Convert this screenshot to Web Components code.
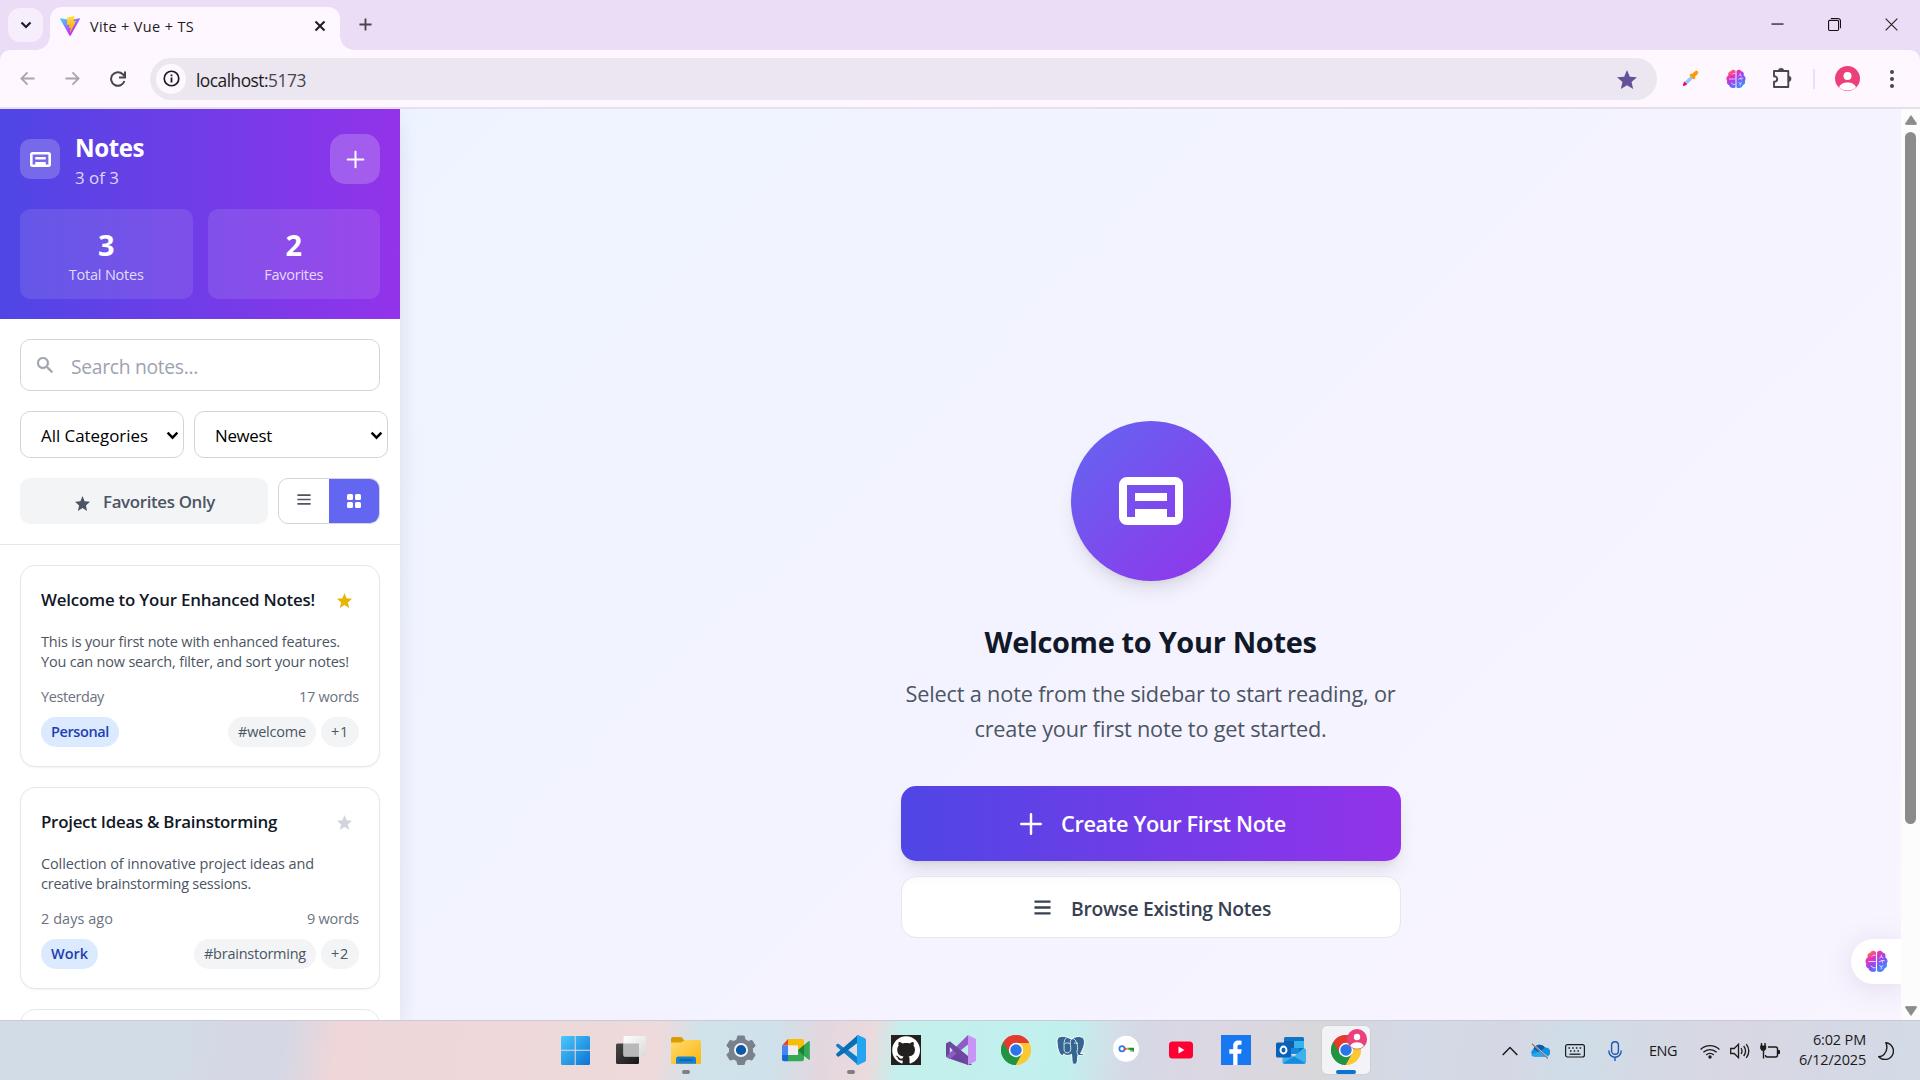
<!DOCTYPE html>
<html lang="en">
<head>
<meta charset="utf-8">
<title>Vite + Vue + TS</title>
<style>
html,body{margin:0;width:1920px;height:1080px;overflow:hidden;font-family:"Open Sans","Noto Sans",sans-serif;color:#111827}
</style>
</head>
<body>
<desktop-screen></desktop-screen>
<script>
const STAR='<path d="M12 17.27L18.18 21l-1.64-7.03L22 9.24l-7.19-.61L12 2 9.19 8.63 2 9.24l5.46 4.73L5.82 21z" fill="currentColor"/>';
const CHROME=`<circle cx="15" cy="15" r="15" fill="#fff"/>
<path d="M15 15L2.01 7.5A15 15 0 0 1 27.99 7.5z" fill="#e33b2e"/><path d="M15 15L2.01 7.5A15 15 0 0 0 15 30z" fill="#229342"/><path d="M15 15L27.99 7.5A15 15 0 0 1 15 30z" fill="#fcc934"/>
<path d="M15 8H28.2A15 15 0 0 0 2.01 7.5L8.9 18.5z" fill="#e33b2e"/><path d="M21.06 18.5L14.5 30A15 15 0 0 0 28.3 8H15z" fill="#fcc934"/><path d="M8.94 18.5L2.01 7.5A15 15 0 0 0 14.7 30L21.06 18.6z" fill="#229342"/>
<circle cx="15" cy="15" r="7.2" fill="#fff"/><circle cx="15" cy="15" r="5.7" fill="#2b75e8"/>`;
const AVATAR='<circle cx="12.5" cy="12.5" r="12.5" fill="#ec407a"/><circle cx="12.5" cy="10" r="4" fill="#fff"/><path d="M4 21.2c1.5-3.4 5-4.7 8.500-4.7s7 1.300 8.500 4.700A12.500 12.500 0 0 1 4 21.200z" fill="#fff"/>';
const ICONS={
chev:['0 0 12 8','<path d="M1.500 1.500L6 6l4.500-4.500" fill="none" stroke="currentColor" stroke-width="2.200"/>'],
vite:['0 0 256 257','<defs><linearGradient id="a" x1="-.8%" x2="57.600%" y1="7.600%" y2="78.400%"><stop stop-color="#41d1ff"/><stop offset="1" stop-color="#bd34fe"/></linearGradient><linearGradient id="b" x1="43%" x2="50%" y1="2%" y2="89%"><stop stop-color="#ffea83"/><stop offset=".08" stop-color="#ffdd35"/><stop offset="1" stop-color="#ffa800"/></linearGradient></defs><path fill="url(#a)" d="M255.153 37.938L134.897 252.976c-2.483 4.440-8.862 4.466-11.382.048L.875 37.958c-2.746-4.814 1.371-10.646 6.827-9.670l120.385 21.517a6.537 6.537 0 0 0 2.322-.004l117.867-21.483c5.438-.991 9.574 4.796 6.877 9.620Z"/><path fill="url(#b)" d="M185.432.063L96.440 17.501a3.268 3.268 0 0 0-2.634 3.014l-5.474 92.456a3.268 3.268 0 0 0 3.997 3.378l24.777-5.718c2.318-.535 4.413 1.507 3.936 3.838l-7.361 36.047c-.495 2.426 1.782 4.500 4.151 3.780l15.304-4.649c2.372-.720 4.652 1.360 4.150 3.788l-11.698 56.621c-.732 3.542 3.979 5.473 5.943 2.437l1.313-2.028l72.516-144.720c1.215-2.423-.880-5.186-3.540-4.672l-25.505 4.922c-2.396.462-4.435-1.770-3.759-4.114l16.646-57.705c.677-2.350-1.370-4.583-3.769-4.113Z"/>'],
x:['0 0 12 12','<path d="M1.500 1.500l9 9M10.500 1.500l-9 9" stroke="currentColor" stroke-width="2"/>'],
xthin:['0 0 14 14','<path d="M.7.7l12.600 12.600M13.300.7L.7 13.300" stroke="currentColor" stroke-width="1.200"/>'],
plus:['0 0 14 14','<path d="M7 .5v13M.5 7h13" stroke="currentColor" stroke-width="2"/>'],
plusr:['0 0 18 18','<path d="M9 1v16M1 9h16" stroke="currentColor" stroke-width="2" stroke-linecap="round"/>'],
min:['0 0 14 14','<path d="M.5 6.500h13" stroke="#000" stroke-width="1.200"/>'],
restore:['0 0 14 14','<rect x=".6" y="2.600" width="10.800" height="10.800" rx="1.200" fill="none" stroke="#111" stroke-width="1.200"/><path d="M3 .6h7.500a3 3 0 0 1 3 3V11" fill="none" stroke="#111" stroke-width="1.200"/>'],
back:['0 0 16 16','<path d="M15.500 8H2M8 1.500L1.500 8 8 14.500" fill="none" stroke="currentColor" stroke-width="1.900"/>'],
fwd:['0 0 16 16','<path d="M.5 8H14M8 1.500L14.500 8 8 14.500" fill="none" stroke="currentColor" stroke-width="1.900"/>'],
reload:['0 0 16 16','<path d="M14.400 10A6.800 6.800 0 1 1 12.800 3.200L14.800 5.300" fill="none" stroke="currentColor" stroke-width="2"/><path d="M15 .5V6.500H9" fill="none" stroke="currentColor" stroke-width="2"/>'],
info:['0 0 18 18','<circle cx="9" cy="9" r="7.700" fill="none" stroke="currentColor" stroke-width="1.800"/><path d="M9 8v5.200M9 4.800v1.900" stroke="currentColor" stroke-width="1.900"/>'],
star:['2 2 20 19',STAR],
dropper:['0 0 18 18','<path d="M1 17c0-2.600.8-4 2.200-5.200l2.600 2.600C4.800 16.200 3.300 17 1 17z" fill="#f50057"/><path d="M3.500 12L9.500 6l2.600 2.600-6 6c-1 .8-3.400-1.400-2.600-2.600z" fill="#90caf9"/><path d="M8.200 5.200l1.300-1.300 1 .9 3-3c2.200-2 4.500.4 2.600 2.600l-3 3 .9 1-1.300 1.300z" fill="#ff9800" stroke="#ff9800" stroke-width=".8"/>'],
brain:['0 0 24 24','<defs><linearGradient id="g" x1=".1" y1="0" x2=".8" y2="1"><stop stop-color="#ff9a1f"/><stop offset=".28" stop-color="#ee2fb5"/><stop offset=".58" stop-color="#8b4df5"/><stop offset="1" stop-color="#2a9bff"/></linearGradient></defs><path fill="url(#g)" d="M11.400 2.200C9.500 0 6.300.600 5.600 2.700 3.200 3 1.900 5.500 2.900 7.500.400 8.800-.200 12.300 1.400 14.300c-1 2.400.4 4.500 2.300 5 .6 3.500 5.500 4.700 7.700 2.500zM12.600 2.200c1.900-2.200 5.100-1.600 5.800.500 2.400.300 3.700 2.800 2.700 4.800 2.500 1.300 3.100 4.800 1.500 6.800 1 2.400-.4 4.500-2.300 5-.6 3.500-5.500 4.700-7.700 2.500z"/><path d="M11 5.500H8.500L7 7M3.500 12H11M11 18.500H8.500L6 16.500M15 8.500l1.500-1.200M17 5v2.300l2 1M14.500 12.500l3-1.500h3M17.500 11l1 2.500M15 16l2 1.500v2.500M17 17.500l2-1.500" fill="none" stroke="#fff" stroke-width=".8"/>'],
puzzle:['0 0 22 22','<path d="M3 4h14.300v16H3v-5.200c4.300 0 4.300-5.600 0-5.600z" fill="none" stroke="currentColor" stroke-width="1.900" stroke-linejoin="round"/><path d="M7.300 4a2.800 2.800 0 0 1 5.600 0zM17.300 9a2.800 2.800 0 0 1 0 5.600z" fill="currentColor" stroke="currentColor" stroke-width=".6"/>'],
avatar:['0 0 25 25',AVATAR],
dots:['0 0 4 18','<g fill="currentColor"><circle cx="2" cy="2" r="2"/><circle cx="2" cy="9" r="2"/><circle cx="2" cy="16" r="2"/></g>'],
note:['0 0 64 48','<path fill="currentColor" fill-rule="evenodd" d="M8 0h48a8 8 0 0 1 8 8v32a8 8 0 0 1-8 8H8a8 8 0 0 1-8-8V8a8 8 0 0 1 8-8zM8 8v32h8v-8h32v8h8V8zM16 16h32v8H16z"/>'],
search:['3 3 17.500 17.500','<path fill="currentColor" stroke="currentColor" stroke-width=".4" d="M15.500 14h-.79l-.28-.27A6.470 6.470 0 0 0 16 9.500 6.500 6.500 0 1 0 9.500 16c1.610 0 3.090-.59 4.230-1.570l.27.28v.79l5 4.990L20.490 19l-4.990-5zm-6 0C7.010 14 5 11.990 5 9.500S7.010 5 9.500 5 14 7.010 14 9.500 11.990 14 9.500 14z"/>'],
list:['0 0 18 14','<path d="M.5 1.500h17M.5 7h17M.5 12.500h17" stroke="currentColor" stroke-width="2.200"/>'],
grid:['0 0 14 14','<g fill="currentColor"><rect width="6" height="6" rx="1.500"/><rect x="8" width="6" height="6" rx="1.500"/><rect y="8" width="6" height="6" rx="1.500"/><rect x="8" y="8" width="6" height="6" rx="1.500"/></g>'],
up:['0 0 12 10','<path d="M6 .5L11.500 8.500q.2 1-.8 1H1.300q-1 0-.8-1z" fill="#8b8b8b" stroke="#8b8b8b" stroke-width=".8"/>'],
down:['0 0 12 10','<path d="M6 9.500L11.500 1.500q.2-1-.8-1H1.300q-1 0-.8 1z" fill="#8b8b8b" stroke="#8b8b8b" stroke-width=".8"/>'],
win:['0 0 30 30','<defs><linearGradient id="w" x1="0" y1="0" x2="1" y2="1"><stop stop-color="#4cc9fb"/><stop offset="1" stop-color="#0a74d4"/></linearGradient></defs><path fill="url(#w)" d="M0 2.500a1.500 1.500 0 0 1 1.500-1.500H13.700v13.800H0zM14.700 1H27.500a1.500 1.500 0 0 1 1.500 1.500v12.300H14.700zM0 15.800H13.700V30H1.500a1.500 1.500 0 0 1-1.500-1.500zM14.700 15.800h14.300v12.700A1.500 1.500 0 0 1 27.500 30H14.700z"/>'],
task:['0 0 30 30','<defs><linearGradient id="t" x1="0" y1="0" x2="1" y2="1"><stop stop-color="#fff"/><stop offset="1" stop-color="#d9d9db"/></linearGradient><linearGradient id="k" x1="0" y1="0" x2="1" y2="1"><stop stop-color="#484848"/><stop offset="1" stop-color="#161616"/></linearGradient></defs><rect x="0" y="8.500" width="23" height="20.500" rx="1.500" fill="url(#k)"/><rect x="7.500" y="1" width="22.500" height="20.500" rx="1.500" fill="url(#t)"/><path d="M7.500 8.500H23v13H9a1.500 1.500 0 0 1-1.500-1.500z" fill="#b9b9b9"/>'],
folder:['0 0 30 30','<defs><linearGradient id="f" x1="0" y1="0" x2="1" y2="1"><stop stop-color="#ffdc70"/><stop offset="1" stop-color="#fab60e"/></linearGradient></defs><path d="M0 4a2 2 0 0 1 2-2h7.500q1 0 1.700.8L13 5h15v6H0z" fill="#dd9a06"/><path d="M0 7.500h9.500q1.200 0 2-.8l1-.9q.8-.8 2-.8H28a2 2 0 0 1 2 2V27.500a1.500 1.500 0 0 1-1.500 1.500h-27A1.500 1.500 0 0 1 0 27.500z" fill="url(#f)"/><path d="M5 28.800V24a2.500 2.500 0 0 1 2.500-2.500h15A2.500 2.500 0 0 1 25 24v4.800z" fill="#1681d3"/><path d="M8.500 25h13" stroke="#0b5299" stroke-width="1.200"/>'],
gear:['0 0 30 30','<path d="M11.800 1h6.400l1 3.700 3 1.700 3.800-1 3.200 5.300-2.700 2.900v3.300l2.700 2.900-3.200 5.300-3.800-1-3 1.700-1 3.700h-6.400l-1-3.700-3-1.700-3.800 1L.8 19.800l2.700-2.900v-3.300L.8 10.700 4 5.400l3.800 1 3-1.700z" fill="#78828c" stroke="#78828c" stroke-width="1" stroke-linejoin="round"/><circle cx="15" cy="15" r="7" fill="#f4f4f4"/><circle cx="15" cy="15" r="5.100" fill="#0d58a6"/>'],
meet:['0 0 30 30','<path d="M1 10.500L7 4v6.500z" fill="#ea4335"/><path d="M7 4h14a2 2 0 0 1 2 2v6l-6 3v-4.500H7z" fill="#fbbc04"/><path d="M1 10.500h6v9.500H1z" fill="#4285f4"/><path d="M1 20h6v6.300H3a2 2 0 0 1-2-2z" fill="#1967d2"/><path d="M7 20h10v-5l6 3v6.300a2 2 0 0 1-2 2H7z" fill="#34a853"/><path d="M7 10.500h10V20H7z" fill="#f1edf0"/><path d="M17 15l6-5v11z" fill="#188038"/><path d="M23 10l4.500-3.700q1.300-.8 1.300.7v17q0 1.500-1.300.6L23 21z" fill="#34a853"/>'],
vscode:['0 0 30 30','<path d="M22 0L8 13 2.800 9Q1.700 8.300.9 9L.3 9.700Q-.3 10.600.5 11.400L22 30z" fill="#0f7fc9"/><path d="M.5 18.600L22 0V8.500L3 21.500q-.9.500-1.700-.2L.5 20.400q-.7-.9 0-1.800z" fill="#0a6eb4"/><path d="M22 0l7 3.300q1 .5 1 1.600v20.200q0 1.100-1 1.600L22 30q-1.200.2-1.800-.6.8.5.8-.6V1.200q0-1.100-.8-.6Q20.800-.2 22 0z" fill="#24a5f1"/><path d="M21 8.300L12.200 15 21 21.700z" fill="#dfdce3"/>'],
github:['0 0 30 30','<path d="M0 0h30v30H0z" fill="#24201f"/><g transform="translate(1.200 1) scale(1.160)"><path fill="#fff" d="M12 .297c-6.630 0-12 5.373-12 12 0 5.303 3.438 9.800 8.205 11.385.6.113.82-.258.82-.577 0-.285-.01-1.040-.015-2.040-3.338.724-4.042-1.610-4.042-1.610C4.422 18.070 3.633 17.700 3.633 17.700c-1.087-.744.084-.729.084-.729 1.205.084 1.838 1.236 1.838 1.236 1.070 1.835 2.809 1.305 3.495.998.108-.776.417-1.305.76-1.605-2.665-.3-5.466-1.332-5.466-5.930 0-1.310.465-2.380 1.235-3.220-.135-.303-.54-1.523.105-3.176 0 0 1.005-.322 3.300 1.230.96-.267 1.980-.399 3-.405 1.020.006 2.040.138 3 .405 2.280-1.552 3.285-1.230 3.285-1.230.645 1.653.24 2.873.12 3.176.765.840 1.230 1.910 1.230 3.220 0 4.610-2.805 5.625-5.475 5.920.42.360.81 1.096.81 2.220 0 1.606-.015 2.896-.015 3.286 0 .315.210.690.825.570C20.565 22.092 24 17.592 24 12.297c0-6.627-5.373-12-12-12"/></g>'],
vs:['0 0 30 30','<path d="M0 8.500l4-2L26 30l-4 0L4 23.800l-4-2zM3.800 11v8.200L8 15z" fill="#6a449c" fill-rule="evenodd"/><path d="M22 0L0 21.700l4 2.200L22 9.500z" fill="#8e5cc4"/><path d="M4 6.500L22 21v9L0 8.500z" fill="#6f48a2"/><path d="M22 0l8 4v22l-8 4z" fill="#c894f6"/>'],
chrome:['0 0 30 30',CHROME],
postgres:['0 0 30 30','<g stroke="#fff" stroke-width="1" stroke-linejoin="round" fill="#336791"><path d="M16 4c3-3 9-3.500 11.500-.5 2.500 3.300-.2 10.500-3 15 1.800.3 3 0 4 .2-.5 2-4.500 2.300-6.500 1.500-.8 2.500.3 8-2.500 9-3 .8-3.300-2-3.500-4.500l-.5-5.500c-3 2-6.500 1.500-7.500-.5l-1.500 2C2.500 20 1 11 1 5.500 1.500.5 8 .5 11.500 2.500z"/><path d="M10 3c-3 3.500-1.500 8-2 12 .5 2.500 3 3.500 5 2.500 2-1.500 2-4 1.500-7C14 7 14 4 17 3.500c3 1 5 6 4.500 11-1 2-.5 4 .5 5.700M8.500 9c1.500-1.500 4-1.500 5.500 0M18 8.500c1-.8 2.500-.8 4 0" fill="none" stroke-width=".8"/></g>'],
keyc:['0 0 30 30','<circle cx="15" cy="13.800" r="13" fill="#fff"/><circle cx="11" cy="13.800" r="2.600" fill="none" stroke="#3b78e7" stroke-width="1.800"/><path d="M14 13.800h4" stroke="#ffb300" stroke-width="2"/><path d="M17.500 12.800H23v4h-1.500v-1.500h-1v1.500h-1v-2h-2z" fill="#1e8e3e"/><path d="M13.500 12.900h2v1.800h-2z" fill="#ea4335"/>'],
youtube:['0 0 30 30','<rect x="3" y="6.500" width="24" height="17" rx="3.500" fill="#ff0033"/><path d="M12.500 11.500l6 3.500-6 3.500z" fill="#fff"/>'],
facebook:['0 0 30 30','<path d="M0 0h30v30H0z" fill="#1778f2"/><path d="M12.200 30V18.800H8.300v-4.600h3.900v-3.400c0-3.800 2.200-5.300 5.300-5.300 1.300 0 2.500.2 3 .3v4h-2c-1.600 0-2 .8-2 2v2.400h4.200l-.7 4.600h-3.500V30z" fill="#fff"/>'],
outlook:['0 0 30 30','<path d="M8 3.500A1.500 1.500 0 0 1 9.500 2h17A1.500 1.500 0 0 1 28 3.500V18H8z" fill="#1273c4"/><path d="M8 6h10v7H8z" fill="#0f5fae"/><path d="M18 6h10v7H18z" fill="#35b5ee"/><path d="M14 13h9v6h-9z" fill="#1b86d8"/><path d="M28 13l2 1.500V27a1.800 1.800 0 0 1-1.800 1.800H8A1.500 1.500 0 0 1 6.500 27V15l11.500 6.500z" fill="#3cb3ee"/><path d="M7 28l11-6.500L29.500 28q-.5.8-1.500.8H8.500z" fill="#1a8ae0"/><rect y="7.500" width="15" height="15" rx="1.500" fill="#0a62b8"/><ellipse cx="7.500" cy="15" rx="3" ry="3.500" fill="none" stroke="#fff" stroke-width="1.900"/>'],
chrome2:['0 0 36 36','<g transform="translate(0 6)">'+CHROME+'</g><g transform="translate(16 0) scale(.8)"><circle cx="12.500" cy="13.500" r="12.500" fill="#777" opacity=".5"/>'+AVATAR+'</g>'],
trayup:['0 0 16 10','<path d="M.7 9L8 1.500 15.300 9" fill="none" stroke="#1b1b1b" stroke-width="1.500"/>'],
cloud:['0 0 20 16','<path d="M4.500 13.500A4 4 0 0 1 3.500 6 6.500 6.500 0 0 1 15 4.500a4.500 4.500 0 0 1 1.500 9z" fill="#1490df"/><path d="M3.500 6A6.500 6.500 0 0 1 15 4.500L9 9.500z" fill="#0a5cad"/><path d="M1 12l9-4 9 5q-1 .7-2.500.7h-12Q2 13.500 1 12z" fill="#28a8ea"/><path d="M2.500.8l16 14.700" stroke="#fff" stroke-width="1.300"/><path d="M2 .8l16 14.700" stroke="#777" stroke-width="1.200"/>'],
kbd:['0 0 20 14','<rect x=".6" y=".6" width="18.800" height="12.400" rx="2" fill="none" stroke="#1b1b1b" stroke-width="1.200"/><path d="M3.500 4h13M5 7h11" stroke="#1b1b1b" stroke-width="1.500" stroke-dasharray="1.500 2.200"/><path d="M4.500 10.200h11" stroke="#1b1b1b" stroke-width="1.300"/>'],
mic:['0 0 14 20','<rect x="3.600" y=".7" width="6.800" height="12.600" rx="3.400" fill="none" stroke="#1f57b5" stroke-width="1.400"/><path d="M.8 9.500c0 9 12.400 9 12.400 0M7 16.300V20" fill="none" stroke="#1f57b5" stroke-width="1.400"/>'],
wifi:['0 0 20 16','<g fill="none" stroke="#1b1b1b" stroke-width="1.300"><path d="M.6 6.500a13.300 13.300 0 0 1 18.800 0M3.400 9.300a9.400 9.400 0 0 1 13.200 0M6.200 12a5.400 5.400 0 0 1 7.600 0"/></g><circle cx="10" cy="14" r="1.700" fill="#1b1b1b"/>'],
sound:['0 0 20 16','<g fill="none" stroke="#1b1b1b" stroke-width="1.300"><path d="M.7 5.500h3.500L8.500 1.300v13.400L4.200 10.500H.7z"/><path d="M11 5q2 3 0 6M13.700 3q3.700 5 0 10M16.300 1.200q5 6.800 0 13.600"/></g>'],
batt:['0 0 20 16','<g fill="none" stroke="#1b1b1b" stroke-width="1.400"><path d="M8 4h7.500q2 0 2 2v6q0 2-2 2H7q-1.500 0-1.500-2"/><path d="M3.500 8v7.500M1.500 0v4M5 0v4"/></g><path d="M.2 2.500h6v3Q5.500 8 3.200 8T.2 5.500zM18 7h1.200q1 0 1 2t-1 2H18z" fill="#1b1b1b"/>'],
moon:['0 0 16 18','<path d="M8 .8a8.400 8.400 0 1 1-7.200 14Q4 14.500 6 12.500 10.500 8 8 .8z" fill="none" stroke="#1b1b1b" stroke-width="1.400"/>']
};
class UiIcon extends HTMLElement{connectedCallback(){
 const [vb,body]=ICONS[this.getAttribute('name')],w=this.getAttribute('w'),h=this.getAttribute('h')||w;
 (this.shadowRoot||this.attachShadow({mode:'open'})).innerHTML=`<style>:host{display:block;flex:none;width:${w}px;height:${h}px}svg{display:block}</style><svg width="${w}" height="${h}" viewBox="${vb}" preserveAspectRatio="none">${body}</svg>`;
}}
customElements.define('ui-icon',UiIcon);

/* A single line of text set to a fixed measure: spacing is distributed between the letters. */
class FitText extends HTMLElement{connectedCallback(){
 const w=+this.getAttribute('w'),s=+this.getAttribute('s');
 const r=this.shadowRoot||this.attachShadow({mode:'open'});
 r.innerHTML=`<style>:host{display:block;flex:none;width:${w}px;white-space:nowrap;font-size:${(s*.965).toFixed(2)}px}span{display:inline-block;transform:translateY(.04em)}</style><span><slot></slot></span>`;
 const span=r.querySelector('span'),n=this.textContent.length;
 const nat=span.getBoundingClientRect().width;
 span.style.letterSpacing=((w-nat)/n).toFixed(3)+'px';
}}
customElements.define('fit-text',FitText);

const define=(tag,html)=>customElements.define(tag,class extends HTMLElement{connectedCallback(){
 if(this.shadowRoot)return;
 this.attachShadow({mode:'open'}).innerHTML=typeof html==='function'?html(this):html;
}});

define('tab-strip',`<style>
:host{display:flex;height:50px;background:#eaddf5;align-items:flex-start;box-sizing:border-box;padding-left:8px;color:#1d1b20}
.m{width:35px;height:34px;margin-top:8px;border-radius:12px;background:#f6edfd;display:grid;place-items:center}
.t{margin:7px 0 0 7px;width:290px;height:43px;box-sizing:border-box;background:#fef7ff;border-radius:12px 12px 0 0;display:flex;align-items:center;padding:0 14px 6px 10px;position:relative}
.t:before,.t:after{content:"";position:absolute;bottom:0;width:14px;height:14px}
.t:before{left:-14px;background:radial-gradient(circle at 0 0,transparent 13.5px,#fef7ff 14px)}
.t:after{right:-14px;background:radial-gradient(circle at 100% 0,transparent 13.5px,#fef7ff 14px)}
fit-text{margin:-1px auto 0 10px}
.p{margin:18px 0 0 19px;color:#49454f}
.w{margin:18px 22px 0 auto;display:flex;gap:44px;color:#222}
</style><div class="m"><ui-icon name="chev" w="12" h="8"></ui-icon></div>
<div class="t"><ui-icon name="vite" w="20"></ui-icon><fit-text w="104" s="15">Vite + Vue + TS</fit-text><ui-icon name="x" w="12"></ui-icon></div>
<ui-icon class="p" name="plus" w="13"></ui-icon>
<div class="w"><ui-icon name="min" w="13"></ui-icon><ui-icon name="restore" w="13"></ui-icon><ui-icon name="xthin" w="13"></ui-icon></div>`);

define('tool-bar',`<style>
:host{display:block;height:59px;background:#eaddf5}
.b{height:57px;border-bottom:2px solid #e7dfea;background:#fef7ff;border-radius:10px 10px 0 0;display:flex;align-items:center;padding-left:20px;color:#49454f}
.d{color:#aaa4ae}
.o{margin-left:24px;width:1507px;height:42px;border-radius:21px;background:#ece6f0;display:flex;align-items:center;box-sizing:border-box;padding:0 20px 0 6px}
.i{width:30px;height:30px;border-radius:15px;background:#fef7ff;display:grid;place-items:center;color:#1d1b20}
.h{color:#1d1b20;margin-left:10px}.s{color:#65509b;margin-left:auto;margin-top:2px}
.v{width:2px;height:20px;background:#eaddff;margin:0 20px 0 20px}
</style><div class="b"><ui-icon class="d" name="back" w="15"></ui-icon><ui-icon class="d" name="fwd" w="15" style="margin-left:30px"></ui-icon><ui-icon name="reload" w="16" style="margin-left:30px"></ui-icon>
<div class="o"><div class="i"><ui-icon name="info" w="17"></ui-icon></div><fit-text class="h" w="72" s="18">localhost:</fit-text><fit-text w="38" s="18">5173</fit-text><ui-icon class="s" name="star" w="20" h="19"></ui-icon></div>
<ui-icon name="dropper" w="17" style="margin-left:25px"></ui-icon><ui-icon name="brain" w="20" style="margin-left:27px"></ui-icon><ui-icon name="puzzle" w="22" style="margin-left:25px;margin-top:-2px"></ui-icon><div class="v"></div><ui-icon name="avatar" w="25"></ui-icon><ui-icon name="dots" w="4" h="18" style="margin-left:30px"></ui-icon></div>`);

define('stat-box',e=>`<style>:host{flex:1;height:90px;box-sizing:border-box;padding:15px 0;border-radius:10px;background:rgba(255,255,255,.1);display:flex;flex-direction:column;align-items:center}
.n{line-height:40px;font-weight:700}.l{line-height:20px;color:rgba(255,255,255,.8)}</style>
<fit-text class="n" w="16.500" s="30">${e.getAttribute('n')}</fit-text><fit-text class="l" w="${e.getAttribute('w')}" s="15">${e.getAttribute('l')}</fit-text>`);

define('side-header',`<style>:host{display:block;height:210px;box-sizing:border-box;padding:20px;background:linear-gradient(90deg,#4f46e5,#9333ea);color:#fff}
.r{display:flex;height:60px;align-items:center}.i{width:40px;height:40px;border-radius:10px;background:rgba(255,255,255,.2);display:grid;place-items:center}
.i ui-icon{margin-left:1px;margin-top:1px}.x{margin-left:15px;flex:1}.a{line-height:35px;font-weight:700}.c{line-height:25px;color:rgba(255,255,255,.8)}
.p{width:50px;height:50px;border-radius:15px;background:rgba(255,255,255,.2);display:grid;place-items:center}.p ui-icon{transform:translate(.5px,.5px)}
.s{display:flex;gap:15px;margin-top:20px}</style>
<div class="r"><div class="i"><ui-icon name="note" w="21" h="15"></ui-icon></div><div class="x"><fit-text class="a" w="69" s="25">Notes</fit-text><fit-text class="c" w="44" s="17.500">3 of 3</fit-text></div><div class="p"><ui-icon name="plusr" w="18"></ui-icon></div></div>
<div class="s"><stat-box n="3" l="Total Notes" w="75"></stat-box><stat-box n="2" l="Favorites" w="59"></stat-box></div>`);

define('select-box',e=>`<style>:host{display:flex;flex:none;box-sizing:border-box;height:47px;border:1px solid #d1d5db;border-radius:10px;align-items:center;padding:0 4px 0 20px;background:#fff;color:#000}ui-icon{margin-left:auto;margin-top:1px}fit-text{margin-top:-1px}</style><fit-text w="${e.getAttribute('w')}" s="17.500">${e.getAttribute('v')}</fit-text><ui-icon name="chev" w="13" h="9"></ui-icon>`);

define('filter-panel',`<style>:host{display:block;box-sizing:border-box;height:226px;padding:20px;border-bottom:1px solid #e5e7eb}
.q{height:52px;box-sizing:border-box;border:1px solid #d1d5db;border-radius:10px;display:flex;align-items:center;padding-left:16px;color:#9ca3af}
.q fit-text{margin-left:18px}.s{display:flex;gap:10px;margin-top:20px}
.f{display:flex;gap:10px;margin-top:20px;height:46px}.o{width:248px;border-radius:10px;background:#f3f4f6;color:#4b5563;display:flex;align-items:center;justify-content:center;font-weight:600}
.o ui-icon{margin:4px 13px 0 2px}.o fit-text{margin-top:-2px}.g{width:102px;box-sizing:border-box;border:1px solid #d1d5db;border-radius:10px;overflow:hidden;display:flex;color:#4b5563}
.g div{flex:1;display:grid;place-items:center}.g .on{background:#6366f1;color:#fff}</style>
<div class="q"><ui-icon name="search" w="16"></ui-icon><fit-text w="127" s="20">Search notes...</fit-text></div>
<div class="s"><select-box style="width:164px" w="107" v="All Categories"></select-box><select-box style="width:194px" w="57" v="Newest"></select-box></div>
<div class="f"><div class="o"><ui-icon name="star" w="15"></ui-icon><fit-text w="112" s="17.500">Favorites Only</fit-text></div><div class="g"><div><ui-icon name="list" w="14" h="11" style="margin-bottom:4px"></ui-icon></div><div class="on"><ui-icon name="grid" w="14"></ui-icon></div></div></div>`);

define('note-card',e=>{const a=n=>e.getAttribute(n),p=n=>a(n).split('|'),f=(n,c='',s=15)=>{const[t,w]=p(n);return `<fit-text class="${c}" w="${w}" s="${s}">${t.replace('&','&amp;')}</fit-text>`};
return `<style>:host{display:block;flex:none;box-sizing:border-box;height:202px;border:1px solid #e5e7eb;border-radius:15px;padding:19px 20px;background:#fff;box-shadow:0 1px 2px rgba(0,0,0,.05)}
.h{display:flex;height:28px;line-height:28px;align-items:center;justify-content:space-between}.h ui-icon{margin-right:7px;margin-top:3px}.b{font-weight:600;color:#111827}
.d{margin-top:18px;line-height:20px;color:#4b5563}.m{display:flex;justify-content:space-between;margin-top:15px;line-height:20px;color:#6b7280}
.p{display:flex;gap:5px;margin-top:11px;line-height:28px;color:#4b5563}.k{background:#f3f4f6;border-radius:15px;height:30px;padding:0 10px}.c{background:#dbeafe;color:#1e40af;font-weight:600;margin-right:auto}</style>
<div class="h">${f('t','b',17.5)}<ui-icon name="star" w="15" style="color:${a('fav')?'#eab308':'#d1d5db'}"></ui-icon></div>
<div class="d">${f('d1')}${f('d2')}</div><div class="m">${f('when')}${f('words')}</div>
<div class="p"><div class="k c">${f('cat')}</div><div class="k">${f('tag')}</div><div class="k">${f('more')}</div></div>`});

define('side-bar',`<style>:host{display:flex;flex-direction:column;flex:none;width:400px;background:#fff;overflow:visible;z-index:1;position:relative;box-shadow:0 20px 25px -5px rgba(0,0,0,.06),0 0 22px rgba(40,40,120,.07)}
.l{flex:1;min-height:0;overflow:hidden;padding:20px;display:flex;flex-direction:column;gap:20px}</style>
<side-header></side-header><filter-panel></filter-panel><div class="l">
<note-card fav="1" t="Welcome to Your Enhanced Notes!|274" d1="This is your first note with enhanced features.|299" d2="You can now search, filter, and sort your notes!|308" when="Yesterday|63" words="17 words|60" cat="Personal|58" tag="#welcome|68" more="+1|18"></note-card>
<note-card t="Project Ideas & Brainstorming|236" d1="Collection of innovative project ideas and|273" d2="creative brainstorming sessions.|210" when="2 days ago|72" words="9 words|52" cat="Work|37" tag="#brainstorming|102" more="+2|18"></note-card>
<div style="flex:none;height:202px;box-sizing:border-box;border:1px solid #e5e7eb;border-radius:15px"></div></div>`);

define('main-view',`<style>:host{display:flex;flex:1;min-width:0;flex-direction:column;align-items:center;background:linear-gradient(135deg,#eef4ff,#f4f3ff 50%,#faf5ff) 0 0/100% 1155px no-repeat;box-sizing:border-box;padding-top:312px;position:relative}
.c{width:160px;height:160px;border-radius:50%;background:linear-gradient(135deg,#6366f1,#9333ea);display:grid;place-items:center;color:#fff;box-shadow:0 12px 19px -4px rgba(0,0,0,.1),0 5px 8px -5px rgba(0,0,0,.1)}
.t{margin-top:37px;line-height:45px;font-weight:700;color:#111827}.p{line-height:35px;color:#4b5563}
.b1{margin-top:41px;width:500px;height:75px;border-radius:15px;background:linear-gradient(90deg,#4f46e5,#9333ea);color:#fff;display:flex;align-items:center;justify-content:center;gap:19px;font-weight:600;box-sizing:border-box;padding-left:5px;box-shadow:0 12px 19px -4px rgba(0,0,0,.1),0 5px 8px -5px rgba(0,0,0,.1)}
.b1 fit-text{margin-top:-2px}
.b2{margin-top:15px;width:500px;height:62px;box-sizing:border-box;border:1px solid #e5e7eb;border-radius:15px;background:#fff;color:#374151;display:flex;align-items:center;justify-content:center;gap:20px;padding-left:4px;font-weight:600;box-shadow:inset 0 10px 10px -8px rgba(0,0,0,.03)}
.f{position:absolute;right:0;top:830px;width:50px;height:45px;box-sizing:border-box;padding:11px 0 0 14px;background:#fff;border-radius:23px 0 0 23px;box-shadow:0 4px 30px rgba(60,40,90,.13);clip-path:inset(-50px 0 -36px -50px)}</style>
<div class="c"><ui-icon name="note" w="64" h="48"></ui-icon></div>
<fit-text class="t" w="332" s="30">Welcome to Your Notes</fit-text>
<fit-text class="p" style="margin-top:12px" w="490" s="22.500">Select a note from the sidebar to start reading, or</fit-text><fit-text class="p" w="352" s="22.500">create your first note to get started.</fit-text>
<div class="b1"><ui-icon name="plusr" w="22"></ui-icon><fit-text w="225" s="22.500">Create Your First Note</fit-text></div>
<div class="b2"><ui-icon name="list" w="17" h="15"></ui-icon><fit-text w="200" s="20">Browse Existing Notes</fit-text></div>
<div class="f"><ui-icon name="brain" w="23"></ui-icon></div>`);

define('scroll-bar',`<style>:host{display:flex;flex-direction:column;align-items:center;flex:none;width:19px;background:#fcfcfc;box-sizing:border-box;padding:6px 0 4px}
.t{width:11px;height:692px;border-radius:6px;background:#8b8b8b;margin-top:7px}.d{margin-top:auto}</style><ui-icon name="up" w="12" h="10"></ui-icon><div class="t"></div><ui-icon class="d" name="down" w="12" h="10"></ui-icon>`);

define('task-item',e=>`<style>:host{display:flex;flex:none;width:48px;height:48px;margin:0 3.500px;border-radius:5px;flex-direction:column;align-items:center;box-sizing:border-box;padding-top:9px;position:relative}
:host([active]){background:rgba(248,248,252,.85);box-shadow:0 0 0 1px rgba(190,190,200,.3);padding-top:3px}
i{position:absolute;bottom:0;left:20px;width:8px;height:4px;border-radius:2px;background:#808084}:host([active]) i{left:14px;width:20px;background:#0b74d1}
:host([active]) ui-icon{margin-left:6px}</style><ui-icon name="${e.getAttribute('icon')}" w="${e.hasAttribute('active')?36:30}"></ui-icon>${e.hasAttribute('run')||e.hasAttribute('active')?'<i></i>':''}`);

define('task-bar',`<style>:host{display:flex;height:60px;box-sizing:border-box;border-top:1px solid #cbc9d6;padding:5px 26px 0 548.500px;color:#1b1b1b;
background:linear-gradient(98deg,#d2dce6 0,#d2dce6 180px,#d5d7e4 230px,#d5d8e4 285px,#eed6d9 335px,#eed8d9 500px,#eedadb 655px,#d0e2ea 695px,#cfe1ea 770px,#e2d7df 815px,#ebdadd 865px,#c4efec 895px,#c0f0ee 1060px,#d2dfe9 1105px,#d6d8e6 1130px,#dcd7e2 1210px,#d8d7da 1310px,#d3d9e6 1400px,#d5d8e4 1500px,#cfdde8 1560px,#d5d9e4 1650px,#d8d7e3 1720px,#d4d9e5 1850px,#d2dce6 1920px)}
.y{margin-left:auto;display:flex;align-items:center;height:49px}.c{display:flex;flex-direction:column;align-items:flex-end;line-height:20px;margin:-3px 12px 0 19px}</style>
<task-item icon="win"></task-item><task-item icon="task"></task-item><task-item icon="folder" run></task-item><task-item icon="gear"></task-item><task-item icon="meet"></task-item><task-item icon="vscode" run></task-item><task-item icon="github"></task-item><task-item icon="vs"></task-item><task-item icon="chrome"></task-item><task-item icon="postgres"></task-item><task-item icon="keyc"></task-item><task-item icon="youtube"></task-item><task-item icon="facebook"></task-item><task-item icon="outlook"></task-item><task-item icon="chrome2" active></task-item>
<div class="y"><ui-icon name="trayup" w="16" h="10"></ui-icon><ui-icon name="cloud" w="20" h="16" style="margin-left:12px"></ui-icon><ui-icon name="kbd" w="20" h="14" style="margin-left:15px"></ui-icon><ui-icon name="mic" w="14" h="20" style="margin-left:23px"></ui-icon><fit-text w="28" s="15" style="margin:-2px 0 0 27px">ENG</fit-text><ui-icon name="wifi" w="20" h="16" style="margin-left:23px"></ui-icon><ui-icon name="sound" w="20" h="16" style="margin-left:10px"></ui-icon><ui-icon name="batt" w="20" h="16" style="margin-left:10px"></ui-icon>
<div class="c"><fit-text w="53" s="15">6:02 PM</fit-text><fit-text w="67" s="15">6/12/2025</fit-text></div><ui-icon name="moon" w="16" h="18"></ui-icon></div>`);

define('desktop-screen',`<style>:host{display:flex;flex-direction:column;width:1920px;height:1080px;overflow:hidden}.v{display:flex;height:911px;overflow:hidden}</style>
<tab-strip></tab-strip><tool-bar></tool-bar><div class="v"><side-bar></side-bar><main-view></main-view><scroll-bar></scroll-bar></div><task-bar></task-bar>`);
</script>
</body>
</html>
